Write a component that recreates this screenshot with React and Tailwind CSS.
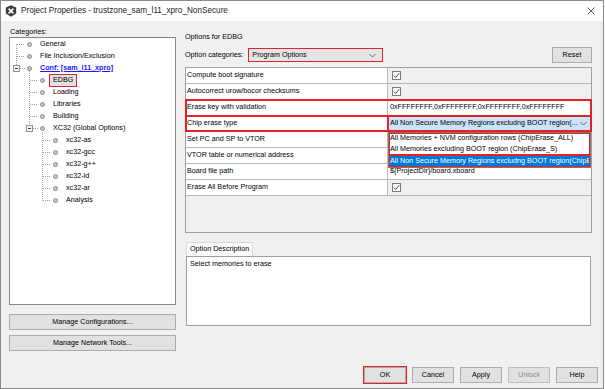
const font = "font-['Liberation_Sans',Arial,sans-serif]";

const tree = [
  { label: 'General', lvl: 0 },
  { label: 'File Inclusion/Exclusion', lvl: 0 },
  { label: 'Conf: [sam_l11_xpro]', lvl: 0, conf: true },
  { label: 'EDBG', lvl: 1, sel: true },
  { label: 'Loading', lvl: 1 },
  { label: 'Libraries', lvl: 1 },
  { label: 'Building', lvl: 1 },
  { label: 'XC32 (Global Options)', lvl: 1 },
  { label: 'xc32-as', lvl: 2 },
  { label: 'xc32-gcc', lvl: 2 },
  { label: 'xc32-g++', lvl: 2 },
  { label: 'xc32-ld', lvl: 2 },
  { label: 'xc32-ar', lvl: 2 },
  { label: 'Analysis', lvl: 2 },
];

const pad = ['pl-[17px]', 'pl-[30px]', 'pl-[43px]'];

const rows = [
  { label: 'Compute boot signature', type: 'check' },
  { label: 'Autocorrect urow/bocor checksums', type: 'check' },
  { label: 'Erase key with validation', value: '0xFFFFFFFF,0xFFFFFFFF,0xFFFFFFFF,0xFFFFFFFF', red: true },
  { label: 'Chip erase type', type: 'combo' },
  { label: 'Set PC and SP to VTOR', value: '' },
  { label: 'VTOR table or numerical address', value: '' },
  { label: 'Board file path', value: '${ProjectDir}/board.xboard' },
  { label: 'Erase All Before Program', type: 'check' },
];

function Chevron({ className }) {
  return (
    <svg width="7" height="5" viewBox="0 0 7 5" className={className}>
      <polyline points="0.5,1 3.5,4 6.5,1" fill="none" stroke="#555" strokeWidth="0.9" />
    </svg>
  );
}

function Checkbox() {
  return (
    <span className="w-[9px] h-[9px] border border-[#7a7a7a] bg-white flex items-center justify-center">
      <svg width="7" height="7" viewBox="0 0 7 7">
        <polyline points="0.8,3.6 2.7,5.5 6.3,1.2" fill="none" stroke="#333" strokeWidth="0.9" />
      </svg>
    </span>
  );
}

function TreeLines() {
  const dash = { stroke: '#a0a0a0', strokeWidth: 1, strokeDasharray: '1 1' };
  const y = (i) => 6.5 + 12 * i;
  return (
    <svg className="absolute left-0 top-0 pointer-events-none" width="60" height="170">
      <line x1="6.5" y1="6" x2="6.5" y2="27" {...dash} />
      {[0, 1].map((i) => (
        <line key={i} x1="7" y1={y(i)} x2="15" y2={y(i)} {...dash} />
      ))}
      <line x1="10" y1={y(2)} x2="15" y2={y(2)} {...dash} />
      <rect x="3.5" y="27.5" width="6" height="6" fill="#f4f4f4" stroke="#939393" />
      <line x1="5" y1="30.5" x2="8" y2="30.5" stroke="#444" />
      <line x1="19.5" y1="33" x2="19.5" y2="87" {...dash} />
      {[3, 4, 5, 6].map((i) => (
        <line key={i} x1="20" y1={y(i)} x2="28" y2={y(i)} {...dash} />
      ))}
      <rect x="16.5" y="87.5" width="6" height="6" fill="#f4f4f4" stroke="#939393" />
      <line x1="18" y1="90.5" x2="21" y2="90.5" stroke="#444" />
      <line x1="23" y1={y(7)} x2="28" y2={y(7)} {...dash} />
      <line x1="32.5" y1="94" x2="32.5" y2="162.5" {...dash} />
      {[8, 9, 10, 11, 12, 13].map((i) => (
        <line key={i} x1="33" y1={y(i)} x2="41" y2={y(i)} {...dash} />
      ))}
    </svg>
  );
}

function Btn({ children, className = '' }) {
  return (
    <div
      className={`h-[16px] flex items-center justify-center bg-[#e1e1e1] border border-[#adadad] text-[7.2px] ${className}`}
    >
      {children}
    </div>
  );
}

export default function App() {
  return (
    <div className={`${font} w-[604px] h-[389px] bg-[#f0f0f0] border border-[#8a8a8a] flex flex-col text-black overflow-hidden`}>
      {/* Title bar */}
      <div className="h-[20px] bg-white flex items-center shrink-0">
        <svg width="12" height="12" viewBox="0 0 12 12" className="ml-[4px]">
          <path d="M6 0.3 L11.2 2.6 L11.2 8.6 L6 11.7 L0.8 8.6 L0.8 2.6 Z" fill="#3d3d3d" />
          <path d="M3.6 3.6 L8.4 8.4 M8.4 3.6 L3.6 8.4" stroke="#fff" strokeWidth="1.5" />
        </svg>
        <span className="ml-[4px] text-[8.2px] text-[#1a1a1a]">Project Properties - trustzone_sam_l11_xpro_NonSecure</span>
        <svg width="8" height="8" viewBox="0 0 8 8" className="ml-auto mr-[8px]">
          <path d="M0.5 0.5 L7.5 7.5 M7.5 0.5 L0.5 7.5" stroke="#333" strokeWidth="0.8" />
        </svg>
      </div>

      {/* Body */}
      <div className="flex-1 flex flex-col">
        <div className="flex pl-[8px]">
          {/* Left column */}
          <div className="w-[167px] pt-[5px] flex flex-col">
            <div className="h-[11px] leading-[11px] text-[7.2px] pl-[1px]">Categories:</div>
            <div className="relative h-[268px] bg-white border border-[#828790]">
              <TreeLines />
              {tree.map((t) => (
                <div key={t.label} className={`h-[12px] flex items-center text-[7.2px] ${pad[t.lvl]}`}>
                  <span className="w-[5px] h-[5px] rounded-full bg-[#c4c4c4] border border-[#8e8e8e] shrink-0" />
                  {t.conf ? (
                    <span className="ml-[8px] font-bold text-[#1a1aff] underline whitespace-nowrap">{t.label}</span>
                  ) : t.sel ? (
                    <span className="ml-[5px] px-[3px] h-[11px] flex items-center bg-[#e2e2e2] outline-[1.5px] outline-solid outline-[#e1222b]">
                      {t.label}
                    </span>
                  ) : (
                    <span className="ml-[8px] whitespace-nowrap">{t.label}</span>
                  )}
                </div>
              ))}
            </div>
            <Btn className="mt-[9px]">Manage Configurations...</Btn>
            <Btn className="mt-[5px]">Manage Network Tools...</Btn>
          </div>

          {/* Right column */}
          <div className="w-[407px] ml-[9px] pt-[10px] flex flex-col text-[7.2px]">
            <div className="h-[12px] leading-[12px]">Options for EDBG</div>
            <div className="mt-[5px] h-[14px] flex items-center">
              <span>Option categories:</span>
              <div className="ml-[5px] w-[135px] h-[14px] bg-[#e5e5e5] border-[1.5px] border-[#e1222b] flex items-center pl-[3px] pr-[6px]">
                <span>Program Options</span>
                <Chevron className="ml-auto" />
              </div>
              <Btn className="ml-auto w-[40px] h-[14px]">Reset</Btn>
            </div>

            {/* Property table */}
            <div className="mt-[5px] h-[166px] border border-[#a0a0a0] bg-[#f0f0f0] flex flex-col">
              {rows.map((r) => (
                <div
                  key={r.label}
                  className={`relative h-[16px] flex border-b border-[#b9b9b9] shrink-0 ${
                    r.red ? 'outline-2 outline-solid outline-[#e1222b] outline-offset-[-1px] z-10' : ''
                  }`}
                >
                  <div
                    className={`w-[202px] bg-white flex items-center pl-[1px] border-r border-[#b9b9b9] whitespace-nowrap ${
                      r.type === 'combo' ? 'outline-2 outline-solid outline-[#e1222b] outline-offset-[-1px]' : ''
                    }`}
                  >
                    {r.label}
                  </div>
                  {r.type === 'check' ? (
                    <div className="flex-1 bg-[#f0f0f0] flex items-center pl-[4px]">
                      <Checkbox />
                    </div>
                  ) : r.type === 'combo' ? (
                    <div className="relative flex-1 bg-[#cce4f7] border border-[#7eb4ea] flex items-center pl-[1px] pr-[3px] whitespace-nowrap outline-2 outline-solid outline-[#e1222b] outline-offset-[-1px]">
                      <span>All Non Secure Memory Regions excludng BOOT region(...</span>
                      <Chevron className="ml-auto" />
                      {/* Open dropdown list */}
                      <div className="absolute left-[-1px] right-[-1px] top-[15px] bg-white border border-[#7a7a7a] flex flex-col z-20 overflow-hidden whitespace-nowrap">
                        <div className="outline-2 outline-solid outline-[#e1222b] outline-offset-[-1px]">
                          <div className="h-[11px] flex items-center pl-[1px]">All Memories + NVM configuration rows (ChipErase_ALL)</div>
                          <div className="h-[11px] flex items-center pl-[1px]">All Memories excluding BOOT region (ChipErase_S)</div>
                        </div>
                        <div className="h-[12px] flex items-center pl-[1px] bg-[#0078d7] text-white outline-2 outline-solid outline-[#e1222b] outline-offset-[-1px]">
                          All Non Secure Memory Regions excludng BOOT region(ChipErase_NS)
                        </div>
                      </div>
                    </div>
                  ) : (
                    <div className="flex-1 bg-white flex items-center pl-[2px] whitespace-nowrap">{r.value}</div>
                  )}
                </div>
              ))}
            </div>

            {/* Description */}
            <div className="mt-[9px] flex pl-[1px]">
              <div className="h-[14px] px-[3px] flex items-center bg-[#fafafa] border border-b-0 border-[#d9d9d9]">
                Option Description
              </div>
            </div>
            <div className="h-[70px] bg-white border border-[#a0a0a0] ml-[1px] mr-[1px] pl-[3px] pt-[2px]">
              Select memories to erase
            </div>
          </div>
        </div>

        {/* Bottom buttons */}
        <div className="mt-auto flex justify-end gap-[6px] pr-[5px] pb-[5px]">
          <Btn className="w-[42px] border-[#0078d7] outline-[1.5px] outline-solid outline-[#e1222b]">OK</Btn>
          <Btn className="w-[42px]">Cancel</Btn>
          <Btn className="w-[42px]">Apply</Btn>
          <Btn className="w-[42px] bg-[#cccccc] border-[#bfbfbf] text-[#8d8d8d]">Unlock</Btn>
          <Btn className="w-[42px]">Help</Btn>
        </div>
      </div>
    </div>
  );
}
